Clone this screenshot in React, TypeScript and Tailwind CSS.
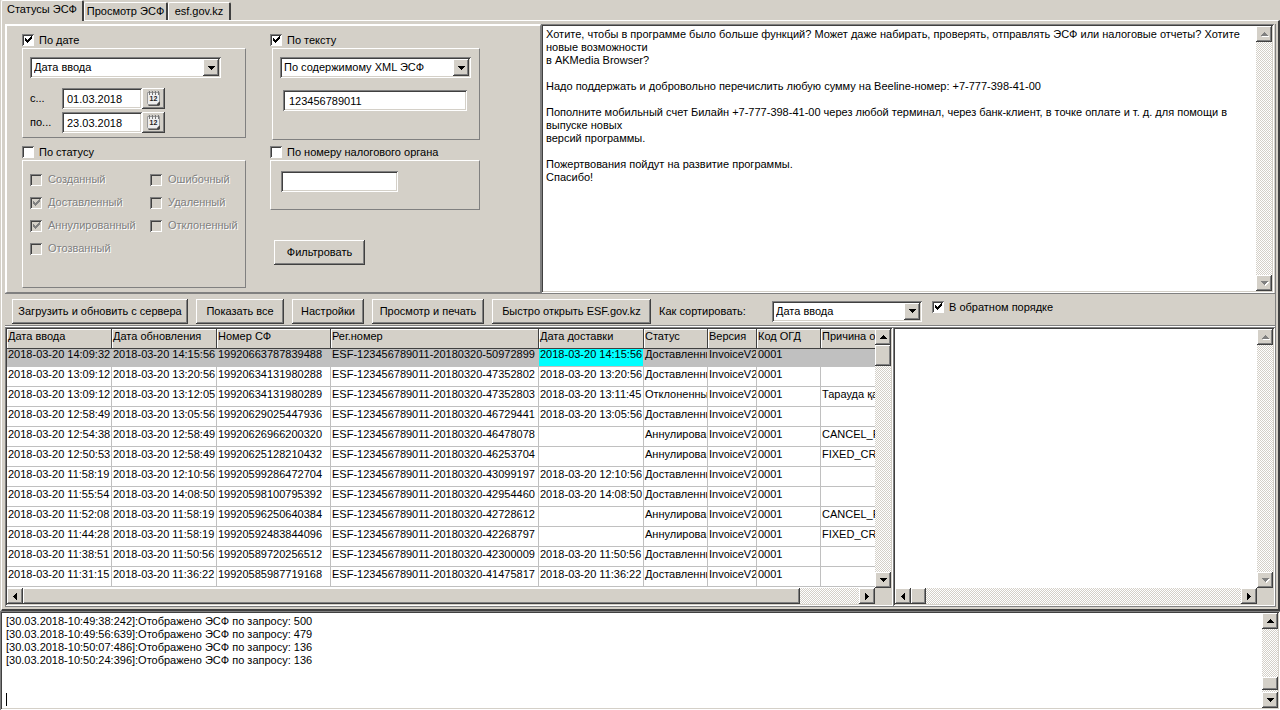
import { useState } from "react";
import type { ReactNode } from "react";
import clsx from "clsx";

const RAISED =
    "bg-[#d4d0c8] shadow-[inset_-1px_-1px_0_#404040,inset_1px_1px_0_#fff,inset_-2px_-2px_0_#808080]";
const SUNKEN =
    "shadow-[inset_1px_1px_0_#808080,inset_-1px_-1px_0_#fff,inset_2px_2px_0_#404040,inset_-2px_-2px_0_#d4d0c8]";
const TRACK =
    "bg-[conic-gradient(#fff_25%,#d4d0c8_0_50%,#fff_0_75%,#d4d0c8_0)] bg-[length:2px_2px]";

const DONATE_TEXT = `Хотите, чтобы в программе было больше функций? Может даже набирать, проверять, отправлять ЭСФ или налоговые отчеты? Хотите
новые возможности
в AKMedia Browser?

Надо поддержать и добровольно перечислить любую сумму на Beeline-номер: +7-777-398-41-00

Пополните мобильный счет Билайн +7-777-398-41-00 через любой терминал, через банк-клиент, в точке оплате и т. д. для помощи в
выпуске новых
версий программы.

Пожертвования пойдут на развитие программы.
Спасибо!`;

const LOG_LINES = [
    "[30.03.2018-10:49:38:242]:Отображено ЭСФ по запросу: 500",
    "[30.03.2018-10:49:56:639]:Отображено ЭСФ по запросу: 479",
    "[30.03.2018-10:50:07:486]:Отображено ЭСФ по запросу: 136",
    "[30.03.2018-10:50:24:396]:Отображено ЭСФ по запросу: 136",
];

const COLUMNS = [
    { title: "Дата ввода", width: "w-[105px]" },
    { title: "Дата обновления", width: "w-[105px]" },
    { title: "Номер СФ", width: "w-[114px]" },
    { title: "Рег.номер", width: "w-[208px]" },
    { title: "Дата доставки", width: "w-[105px]" },
    { title: "Статус", width: "w-[64px]" },
    { title: "Версия", width: "w-[49px]" },
    { title: "Код ОГД", width: "w-[64px]" },
    { title: "Причина отзыва", width: "" },
];

// entered, updated, number, registration suffix, delivered, status, reason
const INVOICES = [
    ["14:09:32", "14:15:56", "19920663787839488", "50972899", "14:15:56", "Доставленный", ""],
    ["13:09:12", "13:20:56", "19920634131980288", "47352802", "13:20:56", "Доставленный", ""],
    ["13:09:12", "13:12:05", "19920634131980289", "47352803", "13:11:45", "Отклоненный", "Тарауда қате"],
    ["12:58:49", "13:05:56", "19920629025447936", "46729441", "13:05:56", "Доставленный", ""],
    ["12:54:38", "12:58:49", "19920626966200320", "46478078", "", "Аннулированный", "CANCEL_PAPER"],
    ["12:50:53", "12:58:49", "19920625128210432", "46253704", "", "Аннулированный", "FIXED_CREATED"],
    ["11:58:19", "12:10:56", "19920599286472704", "43099197", "12:10:56", "Доставленный", ""],
    ["11:55:54", "14:08:50", "19920598100795392", "42954460", "14:08:50", "Доставленный", ""],
    ["11:52:08", "11:58:19", "19920596250640384", "42728612", "", "Аннулированный", "CANCEL_PAPER"],
    ["11:44:28", "11:58:19", "19920592483844096", "42268797", "", "Аннулированный", "FIXED_CREATED"],
    ["11:38:51", "11:50:56", "19920589720256512", "42300009", "11:50:56", "Доставленный", ""],
    ["11:31:15", "11:36:22", "19920585987719168", "41475817", "11:36:22", "Доставленный", ""],
];

function Arrow({ dir, disabled }: { dir: "up" | "down" | "left" | "right"; disabled?: boolean }) {
    const shapes = {
        up: "M3 0h1v1h1v1h1v1h1v1H0V3h1V2h1V1h1z",
        down: "M0 0h7v1H6v1H5v1H4v1H3V3H2V2H1V1H0z",
        left: "M3 0h1v7H3V6H2V5H1V4H0V3h1V2h1V1h1z",
        right: "M0 0h1v1h1v1h1v1h1v1H3v1H2v1H1v1H0z",
    };
    const vertical = dir === "up" || dir === "down";
    return (
        <svg width={vertical ? 7 : 4} height={vertical ? 4 : 7} className="overflow-visible" aria-hidden="true">
            {disabled && <path d={shapes[dir]} fill="#fff" transform="translate(1 1)" />}
            <path d={shapes[dir]} fill={disabled ? "#808080" : "#000"} />
        </svg>
    );
}

function ScrollButton({ dir, disabled }: { dir: "up" | "down" | "left" | "right"; disabled?: boolean }) {
    const names = { up: "Вверх", down: "Вниз", left: "Влево", right: "Вправо" };
    return (
        <button
            type="button"
            aria-label={names[dir]}
            disabled={disabled}
            className={clsx(RAISED, "flex size-4 shrink-0 items-center justify-center")}
        >
            <Arrow dir={dir} disabled={disabled} />
        </button>
    );
}

function VScroll({ disabled, children }: { disabled?: boolean; children?: ReactNode }) {
    return (
        <div className="flex w-4 shrink-0 flex-col">
            <ScrollButton dir="up" disabled={disabled} />
            <div className={clsx(TRACK, "flex flex-1 flex-col")}>{children}</div>
            <ScrollButton dir="down" disabled={disabled} />
        </div>
    );
}

function HScroll({ children }: { children?: ReactNode }) {
    return (
        <div className="flex h-4 shrink-0 bg-[#d4d0c8] pr-4">
            <ScrollButton dir="left" />
            <div className={clsx(TRACK, "flex flex-1")}>{children}</div>
            <ScrollButton dir="right" />
        </div>
    );
}

function Check({
    label,
    defaultChecked,
    disabled,
}: {
    label: string;
    defaultChecked?: boolean;
    disabled?: boolean;
}) {
    return (
        <label className={clsx("flex items-center", disabled ? "gap-1.5 text-[#808080] text-shadow-[1px_1px_0_#fff]" : "gap-[5px]")}>
            <span className="grid size-3 shrink-0 *:[grid-area:1/1]">
                <input
                    type="checkbox"
                    defaultChecked={defaultChecked}
                    disabled={disabled}
                    className={clsx(
                        "peer size-3 appearance-none shadow-[inset_1px_1px_0_#808080,inset_-1px_-1px_0_#fff,inset_2px_2px_0_#404040]",
                        disabled ? "bg-[#d4d0c8]" : "bg-white"
                    )}
                />
                <svg
                    viewBox="0 0 12 12"
                    className="pointer-events-none invisible size-3 peer-checked:visible"
                    fill={disabled ? "#808080" : "#000"}
                    aria-hidden="true"
                >
                    <path d="M3 4h1v1h1v1h1V5h1V4h1V3h1V2h1v3H9v1H8v1H7v1H6v1H5V8H4V7H3z" />
                </svg>
            </span>
            <span className="whitespace-nowrap">{label}</span>
        </label>
    );
}

function Combo({ label, options, className }: { label: string; options: string[]; className: string }) {
    return (
        <div className={clsx("grid h-[21px] bg-white *:[grid-area:1/1]", SUNKEN, className)}>
            <select aria-label={label} className="w-full appearance-none pl-1 leading-[13px] outline-none">
                {options.map((o) => (
                    <option key={o}>{o}</option>
                ))}
            </select>
            <span
                className={clsx(
                    RAISED,
                    "pointer-events-none my-0.5 mr-0.5 flex w-4 items-center justify-center justify-self-end"
                )}
            >
                <Arrow dir="down" />
            </span>
        </div>
    );
}

function CalendarIcon() {
    return (
        <svg width="16" height="17" viewBox="0 0 16 17" aria-hidden="true">
            <path d="M2 13h12v2l-1 1H3l-1-1z" fill="#555" />
            <path d="M1.5 2.5h12v9l-3 3h-8l-1-1z" fill="#eee" stroke="#999" />
            <path d="M14 11l-3 4h3z" fill="#444" />
            <path d="M3.5 1v4M6.5 1v4M9.5 1v4M12.5 1v4" stroke="#777" />
            <path d="M2 1h1M5 1h1M8 1h1M11 1h1" stroke="#bbb" />
            <text x="7.5" y="11" textAnchor="middle" fontSize="7" fontWeight="bold" fill="#222">
                12
            </text>
        </svg>
    );
}

function DateField({ id, label, value }: { id: string; label: string; value: string }) {
    return (
        <div className="flex h-[21px] items-center">
            <label htmlFor={id} className="w-8">
                {label}
            </label>
            <input id={id} type="text" defaultValue={value} className={clsx("h-full w-20 bg-white px-[5px] outline-none", SUNKEN)} />
            <button type="button" aria-label="Календарь" className={clsx(RAISED, "flex h-full w-[23px] items-center justify-center")}>
                <CalendarIcon />
            </button>
        </div>
    );
}

function Group({
    title,
    checked,
    className,
    children,
}: {
    title: string;
    checked?: boolean;
    className: string;
    children: ReactNode;
}) {
    return (
        <section className="flex flex-col gap-px">
            <div className="flex h-3.5 items-center">
                <Check label={title} defaultChecked={checked} />
            </div>
            <div className={clsx("border border-t-white border-r-[#808080] border-b-[#808080] border-l-white", className)}>
                {children}
            </div>
        </section>
    );
}

function PushButton({ className, children }: { className: string; children: ReactNode }) {
    return (
        <button type="button" className={clsx(RAISED, "h-[25px] whitespace-nowrap", className)}>
            {children}
        </button>
    );
}

function Tabs() {
    const [active, setActive] = useState(0);
    const tabs = [
        { name: "Статусы ЭСФ", width: "w-[83px]" },
        { name: "Просмотр ЭСФ", width: "w-[84px]" },
        { name: "esf.gov.kz", width: "w-[63px]" },
    ];
    return (
        <div role="tablist" className="flex h-5 items-end pl-px">
            {tabs.map((tab, i) => (
                <button
                    key={tab.name}
                    type="button"
                    role="tab"
                    aria-selected={active === i}
                    onClick={() => setActive(i)}
                    className={clsx(
                        "rounded-t-xs border-t border-r-2 border-l border-t-white border-r-[#404040] border-l-white bg-[#d4d0c8] whitespace-nowrap",
                        active === i ? "relative -mb-px h-[21px] pb-1" : "h-[18px]",
                        tab.width
                    )}
                >
                    {tab.name}
                </button>
            ))}
        </div>
    );
}

function Filters() {
    return (
        <div className="flex gap-6 border-t-2 border-r border-b border-l-2 border-t-white border-r-[#808080] border-b-[#808080] border-l-white pt-[7px] pl-[15px]">
            <div className="flex w-[224px] flex-col gap-[7px]">
                <Group title="По дате" checked className="h-[90px] px-[7px] pt-2">
                    <Combo label="По дате" options={["Дата ввода", "Дата обновления", "Дата доставки"]} className="w-[191px]" />
                    <div className="mt-2.5 flex flex-col gap-[3px]">
                        <DateField id="date-from" label="с..." value="01.03.2018" />
                        <DateField id="date-to" label="по..." value="23.03.2018" />
                    </div>
                </Group>
                <Group title="По статусу" className="h-32 px-[7px] pt-[7px]">
                    <div className="grid auto-rows-[23px] grid-cols-[120px_auto]">
                        <Check label="Созданный" disabled />
                        <Check label="Ошибочный" disabled />
                        <Check label="Доставленный" defaultChecked disabled />
                        <Check label="Удаленный" disabled />
                        <Check label="Аннулированный" defaultChecked disabled />
                        <Check label="Отклоненный" disabled />
                        <Check label="Отозванный" disabled />
                    </div>
                </Group>
            </div>
            <div className="flex w-[210px] flex-col gap-[5px]">
                <Group title="По тексту" checked className="ml-0.5 h-[92px] px-[7px] pt-2">
                    <Combo label="Где искать" options={["По содержимому XML ЭСФ", "По номеру СФ"]} className="w-[191px]" />
                    <input
                        type="text"
                        aria-label="Текст"
                        defaultValue="123456789011"
                        className={clsx("mt-3 ml-[3px] block h-[21px] w-[184px] bg-white px-1.5 outline-none", SUNKEN)}
                    />
                </Group>
                <Group title="По номеру налогового органа" className="h-[50px] px-2.5 pt-2.5">
                    <input
                        type="text"
                        aria-label="Номер налогового органа"
                        className={clsx("block h-[21px] w-[117px] bg-white px-1.5 outline-none", SUNKEN)}
                    />
                </Group>
                <PushButton className="mt-[25px] ml-1 w-[91px]">Фильтровать</PushButton>
            </div>
        </div>
    );
}

function Toolbar() {
    return (
        <div className="flex h-[33px] items-center gap-2 border-b border-white pt-0.5 pl-[7px] shadow-[inset_0_-1px_0_#808080]">
            <PushButton className="w-44">Загрузить и обновить с сервера</PushButton>
            <PushButton className="w-[88px]">Показать все</PushButton>
            <PushButton className="w-[72px]">Настройки</PushButton>
            <PushButton className="w-28">Просмотр и печать</PushButton>
            <PushButton className="w-[159px]">Быстро открыть ESF.gov.kz</PushButton>
            <span className="w-[105px] whitespace-nowrap">Как сортировать:</span>
            <Combo label="Как сортировать" options={["Дата ввода", "Дата обновления", "Дата доставки"]} className="w-[150px]" />
            <div className="pb-2 pl-0.5">
                <Check label="В обратном порядке" defaultChecked />
            </div>
        </div>
    );
}

function InvoiceTable() {
    return (
        <div className="min-w-0 flex-1 overflow-hidden bg-white">
            <table className="w-full min-w-[924px] table-fixed border-separate border-spacing-0 text-left leading-[13px]">
                <thead>
                    <tr>
                        {COLUMNS.map((c) => (
                            <th
                                key={c.title}
                                className={clsx(
                                    "h-5 overflow-hidden border-r border-b border-[#404040] bg-[#d4d0c8] p-0 pt-px pl-px align-top font-normal whitespace-nowrap shadow-[inset_1px_1px_0_#fff]",
                                    c.width
                                )}
                            >
                                {c.title}
                            </th>
                        ))}
                    </tr>
                </thead>
                <tbody>
                    {INVOICES.map(([entered, updated, number, reg, delivered, status, reason], row) => {
                        const cells = [
                            `2018-03-20 ${entered}`,
                            `2018-03-20 ${updated}`,
                            number,
                            `ESF-123456789011-20180320-${reg}`,
                            delivered && `2018-03-20 ${delivered}`,
                            status,
                            "InvoiceV2",
                            "0001",
                            reason,
                        ];
                        return (
                            <tr key={number}>
                                {cells.map((text, col) => (
                                    <td
                                        key={col}
                                        className={clsx(
                                            "overflow-hidden border-r border-b border-[#c0c0c0] p-0 pl-px align-top whitespace-nowrap",
                                            row === 0 ? "h-[18px] leading-[11px]" : "h-5 pt-px",
                                            row === 0 && (col === 4 ? "bg-[#00ffff]" : "bg-[#c0c0c0]")
                                        )}
                                    >
                                        {text}
                                    </td>
                                ))}
                            </tr>
                        );
                    })}
                </tbody>
            </table>
        </div>
    );
}

export default function App() {
    return (
        <div className="flex h-screen min-h-[600px] flex-col bg-[#d4d0c8] font-[Tahoma,'Liberation_Sans',sans-serif] text-[11px] leading-[13px] text-black">
            <Tabs />
            <main className="ml-px flex min-h-0 flex-1 flex-col border-t border-r-2 border-b-2 border-l border-t-white border-r-[#404040] border-b-[#404040] border-l-white pt-[3px] pr-0.5 pb-0.5 pl-[3px]">
                <div className="flex min-h-0 flex-1 flex-col border-r border-b border-[#808080]">
                    <div className="grid h-[270px] shrink-0 grid-cols-[536px_1fr] border-b border-[#808080] pr-px">
                        <Filters />
                        <div className={clsx("flex min-w-0 bg-white p-0.5", SUNKEN)}>
                            <textarea
                                readOnly
                                aria-label="Сообщение"
                                value={DONATE_TEXT}
                                className="min-w-0 flex-1 resize-none overflow-hidden px-[3px] pt-0.5 outline-none"
                            />
                            <VScroll disabled />
                        </div>
                    </div>
                    <Toolbar />
                    <div className="grid min-h-0 flex-1 grid-cols-[888fr_382fr]">
                        <div className={clsx("flex min-h-0 min-w-0 flex-col p-0.5", SUNKEN)}>
                            <div className="flex min-h-0 flex-1">
                                <InvoiceTable />
                                <VScroll>
                                    <div className={clsx(RAISED, "h-[21px]")} />
                                </VScroll>
                            </div>
                            <HScroll>
                                <div className={clsx(RAISED, "w-[93%]")} />
                            </HScroll>
                        </div>
                        <div className={clsx("flex min-h-0 min-w-0 flex-col p-0.5", SUNKEN)}>
                            <div className="flex min-h-0 flex-1">
                                <textarea aria-label="Описание" className="min-w-0 flex-1 resize-none overflow-hidden bg-white outline-none" />
                                <VScroll disabled />
                            </div>
                            <HScroll>
                                <div className={clsx(RAISED, "w-[15px]")} />
                            </HScroll>
                        </div>
                    </div>
                </div>
            </main>
            <footer className={clsx("flex h-[99px] shrink-0 bg-white p-0.5", SUNKEN)}>
                <div role="log" className="flex-1 overflow-hidden pt-0.5 pl-1">
                    {LOG_LINES.map((line) => (
                        <p key={line}>{line}</p>
                    ))}
                    <div className="mt-[26px] h-[13px] w-px bg-black" />
                </div>
                <VScroll>
                    <div className={clsx(RAISED, "mt-auto mb-0.5 h-[13px]")} />
                </VScroll>
            </footer>
        </div>
    );
}
